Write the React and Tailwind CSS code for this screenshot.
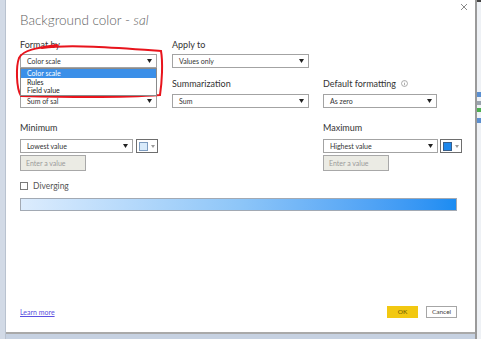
import React from 'react';

function Arrow() {
    return (
        <svg width="5" height="4" viewBox="0 0 5 4" className="shrink-0">
            <path d="M0 0 H5 L2.5 4 Z" fill="#222" />
        </svg>
    );
}

function Select({ label, width }) {
    return (
        <div className={`flex h-[14px] items-center justify-between border border-[#a3a3a3] bg-white pl-[6px] pr-[4px] ${width}`}>
            <span className="text-[7px] leading-[10px] text-[#333]">{label}</span>
            <Arrow />
        </div>
    );
}

function Swatch({ fill, edge }) {
    return (
        <div className="flex h-[14px] w-[22px] items-center gap-[3px] border border-[#6e6e6e] bg-white pl-[2px]">
            <div className={`h-[9px] w-[9px] border ${fill} ${edge}`} />
            <svg width="4" height="3" viewBox="0 0 4 3">
                <path d="M0 0 H4 L2 3 Z" fill="#9a9a9a" />
            </svg>
        </div>
    );
}

function ValueInput() {
    return (
        <div className="mt-[2px] flex h-[16px] w-[66px] items-center border border-[#a8a8a8] bg-[#ebebe4] pl-[5px]">
            <span className="text-[7px] leading-[10px] text-[#9a9a9a]">Enter a value</span>
        </div>
    );
}

function Label({ children }) {
    return <span className="text-[9px] leading-[12px] text-[#333]">{children}</span>;
}

export default function App() {
    return (
        <div className="relative flex h-[339px] w-[481px] overflow-hidden bg-[#c6d1e1] font-['Lato',sans-serif]">
            {/* left app strip */}
            <div className="h-full w-[6px] border-r border-[#b9c2cf] bg-[#d2dae6]" />

            {/* dialog */}
            <div className="flex h-[334px] w-[469px] flex-col border-b-2 border-[#a9a9a9] bg-white pl-[14px] pr-[18px]">
                <div className="flex h-[38px] items-start justify-between">
                    <h1 className="mt-[12px] text-[13.5px] font-light leading-[16px] text-[#5e5e5e]">
                        Background color - <i>sal</i>
                    </h1>
                    <svg width="6" height="6" viewBox="0 0 6 6" className="mr-[-10px] mt-[4px]">
                        <path d="M0 0 L6 6 M6 0 L0 6" stroke="#8a8a8a" strokeWidth="1" />
                    </svg>
                </div>

                <div className="grid grid-cols-[152px_151px_1fr]">
                    <div className="flex h-[16px] items-start pt-[1px]">
                        <Label>Format by</Label>
                    </div>
                    <div className="flex h-[16px] items-start pt-[1px]">
                        <Label>Apply to</Label>
                    </div>
                    <div />

                    <div className="relative">
                        <Select label="Color scale" width="w-[137px]" />
                        <div className="absolute left-0 top-[14px] z-10 flex w-[137px] flex-col border border-[#8a8a8a] bg-white">
                            <span className="bg-[#3b8fe8] pl-[6px] text-[7px] leading-[8.5px] text-white">Color scale</span>
                            <span className="pl-[6px] text-[7px] leading-[8.5px] text-[#222]">Rules</span>
                            <span className="pl-[6px] text-[7px] leading-[8.5px] text-[#222]">Field value</span>
                        </div>
                    </div>
                    <Select label="Values only" width="w-[137px]" />
                    <div />

                    <div className="h-[26px]" />
                    <div className="flex h-[26px] items-end pb-[4px]">
                        <Label>Summarization</Label>
                    </div>
                    <div className="flex h-[26px] items-end gap-[5px] pb-[4px]">
                        <Label>Default formatting</Label>
                        <svg width="7" height="7" viewBox="0 0 8 8" className="mb-[3px]">
                            <circle cx="4" cy="4" r="3.4" fill="none" stroke="#8a8a8a" strokeWidth="0.8" />
                            <path d="M4 3.4 V6 M4 2 V2.6" stroke="#8a8a8a" strokeWidth="0.8" />
                        </svg>
                    </div>

                    <Select label="Sum of sal" width="w-[137px]" />
                    <Select label="Sum" width="w-[137px]" />
                    <Select label="As zero" width="w-[114px]" />
                </div>

                <div className="grid grid-cols-[303px_1fr]">
                    <div className="flex flex-col">
                        <div className="flex h-[31px] items-end pb-[5px]">
                            <Label>Minimum</Label>
                        </div>
                        <div className="flex gap-[3px]">
                            <Select label="Lowest value" width="w-[113px]" />
                            <Swatch fill="bg-[#d9ebfb]" edge="border-[#7d9cc0]" />
                        </div>
                        <ValueInput />
                    </div>
                    <div className="flex flex-col">
                        <div className="flex h-[31px] items-end pb-[5px]">
                            <Label>Maximum</Label>
                        </div>
                        <div className="flex gap-[2px]">
                            <Select label="Highest value" width="w-[115px]" />
                            <Swatch fill="bg-[#1e88ec]" edge="border-[#3a5f8a]" />
                        </div>
                        <ValueInput />
                    </div>
                </div>

                <div className="mt-[11px] flex h-[8px] items-center gap-[5px]">
                    <div className="h-[8px] w-[8px] border border-[#7a7a7a] bg-white" />
                    <span className="text-[8.5px] leading-[10px] text-[#555]">Diverging</span>
                </div>

                <div className="mt-[8px] h-[13px] w-full border border-[#a2a9b3] bg-gradient-to-r from-[#dcecfd] via-[#8ec6f8] to-[#1a8cf2]" />

                <div className="mt-auto mb-[14px] flex items-end justify-between">
                    <a href="#" className="mb-[1px] text-[7px] leading-[9px] text-[#5a4fe0] underline">
                        Learn more
                    </a>
                    <div className="flex gap-[8px]">
                        <button className="flex h-[12px] w-[31px] items-center justify-center bg-[#f2c811] text-[6.5px] text-[#6b5700]">
                            OK
                        </button>
                        <button className="flex h-[12px] w-[31px] items-center justify-center border border-[#a6a6a6] bg-white text-[6.5px] text-[#444]">
                            Cancel
                        </button>
                    </div>
                </div>
            </div>

            {/* right app strip */}
            <div className="flex h-full w-[6px] border-l-2 border-[#9a9a9a] bg-[#eef1f5]">
                <div className="flex w-full flex-col">
                    <div className="h-[2px] bg-[#444]" />
                    <div className="mt-[90px] h-[5px] bg-[#5b8fd0]" />
                    <div className="mt-[4px] h-[4px] bg-[#9aa3ad]" />
                    <div className="mt-[3px] h-[4px] bg-[#4caf50]" />
                    <div className="mt-[6px] h-[5px] bg-[#5b8fd0]" />
                </div>
            </div>

            {/* red hand-drawn mark */}
            <svg className="pointer-events-none absolute left-0 top-0" width="481" height="339" viewBox="0 0 481 339">
                <path
                    d="M42 48 C70 44 120 48 161 51 C163 62 162 82 160 95 C120 98 60 97 21 96 C16 88 16 66 19 58 C23 50 36 48 57 45"
                    fill="none"
                    stroke="#e8141c"
                    strokeWidth="2"
                    strokeLinecap="round"
                />
            </svg>
        </div>
    );
}
